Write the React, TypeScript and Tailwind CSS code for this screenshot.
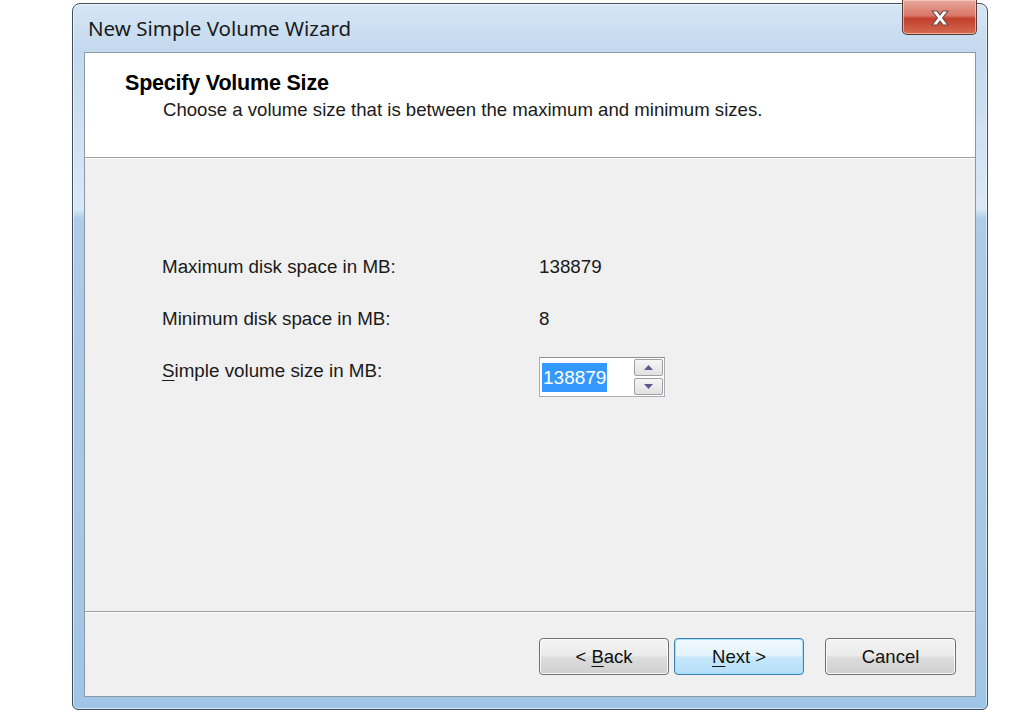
import React from 'react';

const sans = "font-['Liberation_Sans',Arial,sans-serif]";

const CloseGlyph: React.FC = () => (
    <svg width="24" height="18" viewBox="0 0 24 18">
        <path d="M4 2 L9 2 L12 6 L15 2 L20 2 L14.5 9 L20 16 L15 16 L12 12 L9 16 L4 16 L9.5 9 Z" fill="#ffffff" stroke="#6b4a45" strokeWidth="1.2" strokeLinejoin="round" />
    </svg>
);

const WizardButton: React.FC<{ label: React.ReactNode; primary?: boolean; className?: string }> = ({ label, primary, className }) => (
    <button
        className={`h-[37px] w-[130px] rounded-[4px] border text-[18.5px] text-[#111] ${sans} ${
            primary
                ? 'border-[#3c7fb1] bg-[linear-gradient(180deg,#f1f9fe_0%,#e3f3fc_48%,#c7e8fb_52%,#b4def8_100%)] shadow-[inset_0_0_0_1px_#a8e0fa]'
                : 'border-[#707070] bg-[linear-gradient(180deg,#f4f4f4_0%,#ebebeb_48%,#dddddd_52%,#cfcfcf_100%)] shadow-[inset_0_0_0_1px_#fbfbfb]'
        } ${className ?? ''}`}
    >
        {label}
    </button>
);

const SpinArrow: React.FC<{ up?: boolean }> = ({ up }) => (
    <svg width="9" height="5" viewBox="0 0 9 5">
        <path d={up ? 'M0 5 L4.5 0 L9 5 Z' : 'M0 0 L4.5 5 L9 0 Z'} fill="#5a5a8a" />
    </svg>
);

const Spinner: React.FC = () => (
    <div className="mt-[6px] flex h-[40px] w-[126px] border border-[#abadb3] border-t-[#8e8f8f] bg-white">
        <div className="flex flex-1 items-center pl-[2px]">
            <span className={`bg-[#3399ff] px-[1px] text-[19px] leading-[29px] text-white ${sans}`}>138879</span>
        </div>
        <div className="flex w-[30px] flex-col gap-[2px] py-[1px] pr-[1px]">
            <div className="flex flex-1 items-center justify-center rounded-[2px] border border-[#a0a0a0] bg-[linear-gradient(180deg,#f6f6f6,#e1e1e1)]">
                <SpinArrow up />
            </div>
            <div className="flex flex-1 items-center justify-center rounded-[2px] border border-[#a0a0a0] bg-[linear-gradient(180deg,#f6f6f6,#e1e1e1)]">
                <SpinArrow />
            </div>
        </div>
    </div>
);

const App: React.FC = () => {
    return (
        <div className="h-[715px] w-[1024px] overflow-hidden bg-white pl-[72px] pt-[3px]">
            <div className="flex h-[707px] w-[916px] flex-col rounded-t-[8px] rounded-b-[6px] border border-[#3f4d5e] bg-[linear-gradient(180deg,#d6e6f5_0px,#c4d9ee_45px,#d2e3f3_150px,#dae8f6_205px,#aecbe7_215px,#a6c6e5_600px,#9fc5e6_100%)] px-[11px] pb-[12px] shadow-[inset_0_0_0_1px_rgba(255,255,255,0.55)]">
                {/* title bar */}
                <div className="flex h-[48px] items-start justify-between">
                    <span className="pl-[4px] pt-[10px] font-['Noto_Sans','Open_Sans',sans-serif] text-[20.5px] leading-[28px] text-[#1a1a1a]">
                        New Simple Volume Wizard
                    </span>
                    <div className="-mr-[1px] -mt-[4px] flex h-[35px] w-[75px] items-center justify-center rounded-b-[5px] border border-t-0 border-[#5b3a36] bg-[linear-gradient(180deg,#e8a89a_0%,#d9786a_45%,#c2402c_55%,#d46a50_100%)] pt-[2px] shadow-[inset_0_0_0_1px_rgba(255,220,210,0.6)]">
                        <CloseGlyph />
                    </div>
                </div>

                {/* client area */}
                <div className="flex flex-1 flex-col border border-[#8a98a8] bg-[#f0f0f0]">
                    <div className="h-[105px] border-b border-b-[#a0a0a0] bg-white pl-[40px] pt-[18px]">
                        <div className={`text-[21.5px] font-bold leading-[24px] tracking-[-0.2px] text-black ${sans}`}>Specify Volume Size</div>
                        <div className={`pl-[38px] pt-[4px] text-[18.6px] leading-[22px] text-[#1a1a1a] ${sans}`}>
                            Choose a volume size that is between the maximum and minimum sizes.
                        </div>
                    </div>
                    <div className="flex flex-1 flex-col border-t border-t-white pl-[77px] pt-[88px]">
                        <div className={`flex flex-col gap-[12px] text-[18.8px] text-[#1a1a1a] ${sans}`}>
                            <div className="flex h-[40px] items-center">
                                <span className="w-[377px]">Maximum disk space in MB:</span>
                                <span>138879</span>
                            </div>
                            <div className="flex h-[40px] items-center">
                                <span className="w-[377px]">Minimum disk space in MB:</span>
                                <span>8</span>
                            </div>
                            <div className="flex items-start">
                                <span className="flex h-[40px] w-[377px] items-center">
                                    <span><span className="underline underline-offset-[3px]">S</span>imple volume size in MB:</span>
                                </span>
                                <Spinner />
                            </div>
                        </div>
                    </div>
                    <div className="flex h-[85px] items-start justify-end border-t border-t-[#a0a0a0] pr-[19px] pt-[26px] shadow-[inset_0_1px_0_#ffffff]">
                        <WizardButton label={<>&lt; <span className="underline underline-offset-[3px]">B</span>ack</>} />
                        <WizardButton primary className="ml-[5px]" label={<><span className="underline underline-offset-[3px]">N</span>ext &gt;</>} />
                        <WizardButton className="ml-[21px] w-[131px]" label="Cancel" />
                    </div>
                </div>
            </div>
        </div>
    );
};

export default App;
